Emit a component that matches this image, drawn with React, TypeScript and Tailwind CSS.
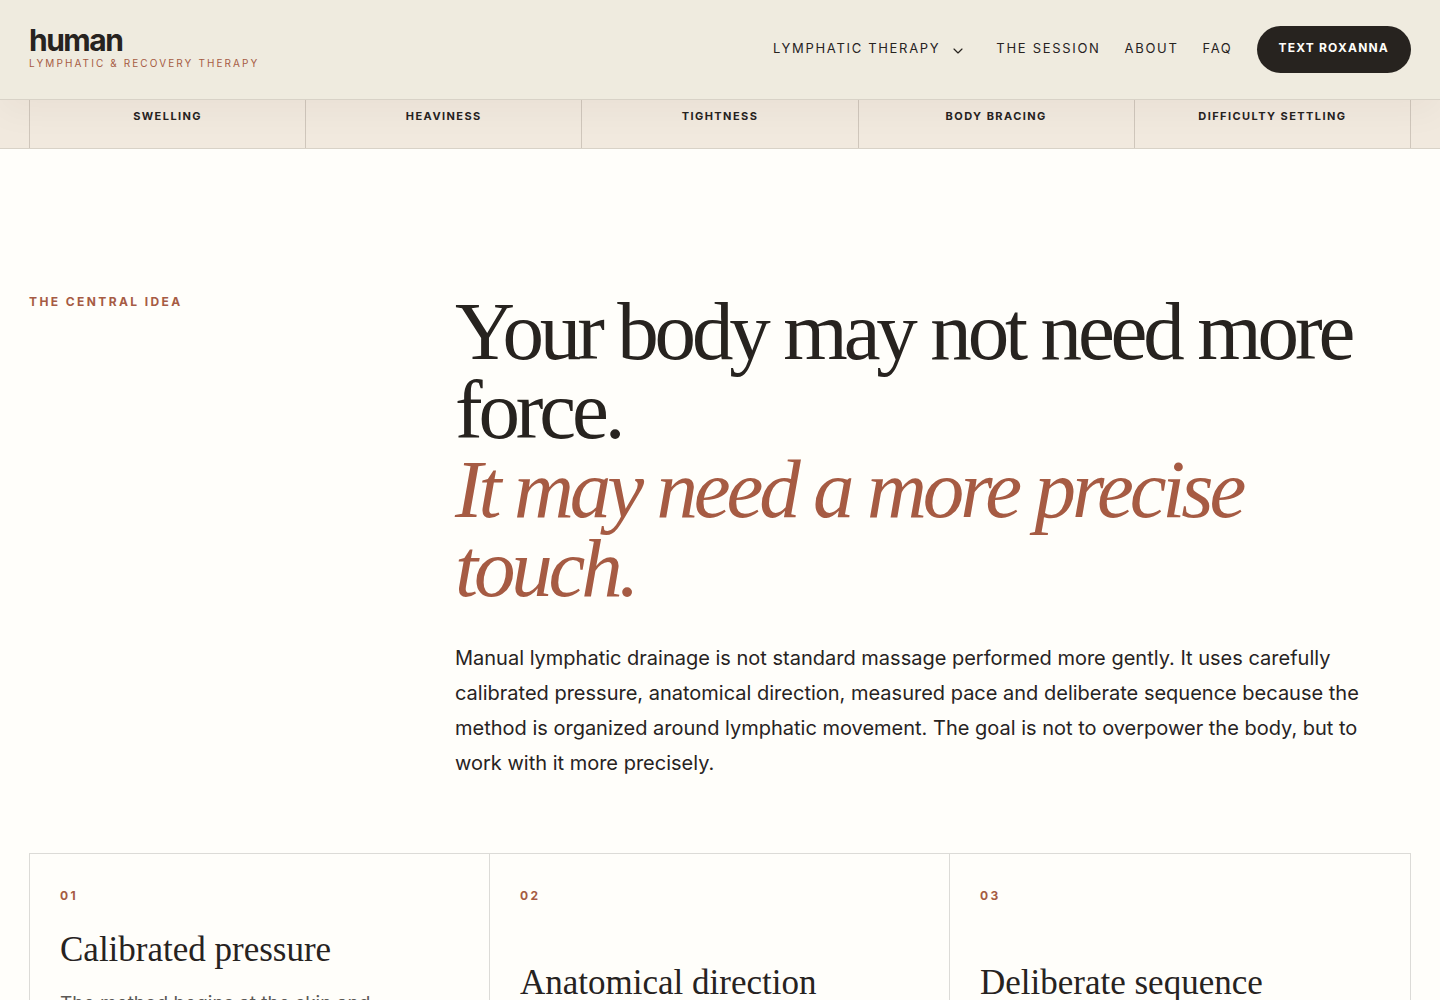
import { ChevronDown } from "lucide-react";

type Card = {
  number: string;
  title: string;
  body?: string;
  titleClass: string;
};

const symptoms = ["Swelling", "Heaviness", "Tightness", "Body bracing", "Difficulty settling"];

const links = [
  { label: "The session", href: "#session" },
  { label: "About", href: "#about" },
  { label: "FAQ", href: "#faq" },
];

const cards: Card[] = [
  {
    number: "01",
    title: "Calibrated pressure",
    body: "The method begins at the skin and",
    titleClass: "mt-6",
  },
  { number: "02", title: "Anatomical direction", titleClass: "mt-[57px]" },
  { number: "03", title: "Deliberate sequence", titleClass: "mt-[57px]" },
];

function Header() {
  return (
    <header className="relative z-10 flex items-center justify-between border-b border-[#d8d2c7] bg-[#efebdf] px-[29px] py-[26px] shadow-[0_12px_35px_rgba(39,35,31,0.04)]">
      <a href="#top" className="flex flex-col pb-px">
        <span className="text-[30px] leading-7 font-bold tracking-[-0.05em]">human</span>
        <span className="text-[10px] leading-[18px] tracking-[0.21em] text-[#a65b43] uppercase">
          Lymphatic &amp; Recovery Therapy
        </span>
      </a>

      <nav className="flex items-center gap-6 text-[13px] leading-5 tracking-[0.13em] uppercase">
        <button
          type="button"
          className="flex items-center gap-2.5 pr-1.5 pb-1 tracking-[0.13em] uppercase"
        >
          Lymphatic therapy
          <ChevronDown className="mt-1.5 size-4" strokeWidth={1.75} />
        </button>
        {links.map((link) => (
          <a key={link.href} href={link.href} className="pb-1">
            {link.label}
          </a>
        ))}
        <a
          href="#text"
          className="rounded-full bg-[#27231f] px-[22px] pt-3 pb-[15px] text-xs leading-5 font-bold tracking-[0.1em] text-[#fffefa]"
        >
          Text Roxanna
        </a>
      </nav>
    </header>
  );
}

function SymptomStrip() {
  return (
    <div className="border-b border-[#d8d2c7] bg-[#f1e9de] px-[29px]">
      <ul className="grid grid-cols-5 border-l border-[#cfc6bb]">
        {symptoms.map((symptom) => (
          <li
            key={symptom}
            className="border-r border-[#cfc6bb] pt-2 pb-6 text-center text-[11px] leading-4 font-bold tracking-[0.13em] uppercase"
          >
            {symptom}
          </li>
        ))}
      </ul>
    </div>
  );
}

function CentralIdea() {
  return (
    <section className="grid grid-cols-[346px_1fr] gap-20 pt-[143px]">
      <p className="text-xs leading-5 font-bold tracking-[0.2em] text-[#a65b43] uppercase">
        The central idea
      </p>
      <div>
        <h1 className="font-['Liberation_Serif',serif] text-[83px] leading-[79px] tracking-[-0.05em]">
          Your body may not need more force.
          <em className="block text-[#a65b43]">It may need a more precise touch.</em>
        </h1>
        <p className="mt-[33px] max-w-[920px] text-[20px] leading-[35px]">
          Manual lymphatic drainage is not standard massage performed more gently. It uses carefully
          calibrated pressure, anatomical direction, measured pace and deliberate sequence because the
          method is organized around lymphatic movement. The goal is not to overpower the body, but to
          work with it more precisely.
        </p>
      </div>
    </section>
  );
}

function MethodCard({ card }: { card: Card }) {
  return (
    <article className="border-r border-[#dcdbd7] px-[30px] pt-[34px] last:border-r-0">
      <p className="text-xs leading-4 font-bold tracking-[0.2em] text-[#a65b43]">{card.number}</p>
      <h2 className={`font-['Liberation_Serif',serif] text-[35px] leading-[44px] ${card.titleClass}`}>
        {card.title}
      </h2>
      {card.body ? <p className="mt-4 text-[19px] leading-8 text-[#5c5955]">{card.body}</p> : null}
    </article>
  );
}

export default function App() {
  return (
    <div className="h-screen overflow-hidden bg-[#fffefa] font-[Inter,sans-serif] text-[#27231f]">
      <Header />
      <SymptomStrip />
      <main className="px-[29px]">
        <CentralIdea />
        <section className="mt-[72px] grid min-h-80 grid-cols-3 border border-[#dcdbd7]">
          {cards.map((card) => (
            <MethodCard key={card.number} card={card} />
          ))}
        </section>
      </main>
    </div>
  );
}
